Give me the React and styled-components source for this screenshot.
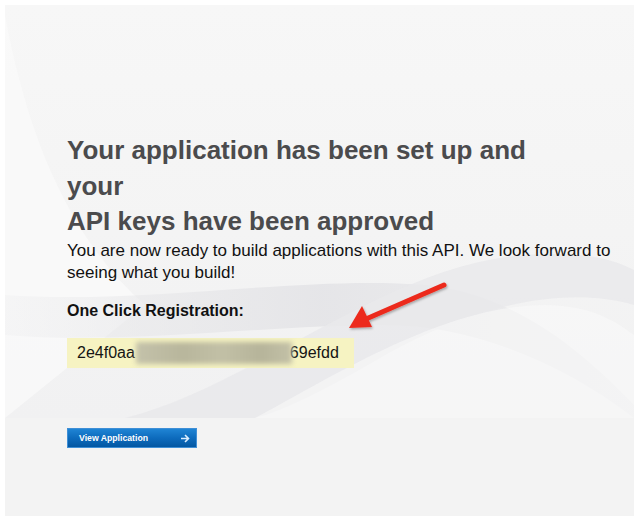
import React from 'react';
import styled, { createGlobalStyle } from 'styled-components';

const GlobalStyle = createGlobalStyle`
  html, body {
    margin: 0;
    padding: 0;
    background: #ffffff;
  }
  body {
    font-family: "Liberation Sans", Arial, Helvetica, sans-serif;
  }
`;

const Page = styled.div`
  padding: 5px;
  width: 640px;
  box-sizing: border-box;
`;

const Panel = styled.div`
  background: #f3f3f3;
  width: 629px;
  height: 511px;
  display: flex;
  flex-direction: column;
`;

const Hero = styled.section`
  position: relative;
  height: 413px;
  padding: 128px 0 0 62px;
  box-sizing: border-box;
  background: linear-gradient(180deg, #f7f7f7 0%, #f4f4f4 55%, #f1f1f2 100%);
  overflow: hidden;
`;

const Backdrop = styled.svg`
  position: absolute;
  left: 0;
  top: 0;
  width: 100%;
  height: 100%;
  pointer-events: none;
`;

const Content = styled.div`
  position: relative;
`;

const Heading = styled.h1`
  margin: 0;
  width: 470px;
  font-size: 26px;
  line-height: 35.5px;
  font-weight: bold;
  color: #4b4b4d;
`;

const Lead = styled.p`
  margin: 0;
  width: 560px;
  font-size: 17px;
  line-height: 22px;
  color: #111111;
`;

const Label = styled.h2`
  margin: 16px 0 0;
  font-size: 16px;
  line-height: 22px;
  font-weight: bold;
  color: #111111;
`;

const KeyBox = styled.div`
  margin-top: 16px;
  width: 287px;
  height: 30px;
  box-sizing: border-box;
  padding-left: 10px;
  display: flex;
  align-items: center;
  background: #f6f3c2;
  font-size: 16px;
  color: #151515;
  white-space: nowrap;
  overflow: hidden;
`;

const Hidden = styled.span`
  display: inline-block;
  width: 156px;
  height: 22px;
  margin: 0 -2px 0 1px;
  background: linear-gradient(90deg, #c4c2aa, #b8b69c 30%, #c2c0a6 55%, #b6b49a 80%, #c3c1a7);
  filter: blur(2.5px);
`;

const Pointer = styled.svg`
  position: absolute;
  left: 335px;
  top: 272px;
`;

const Footer = styled.div`
  padding: 10px 0 0 62px;
`;

const Button = styled.button`
  width: 130px;
  height: 20px;
  box-sizing: border-box;
  padding: 0 6px 0 11px;
  border: 1px solid #3f8fd6;
  background: linear-gradient(180deg, #1f84d4 0%, #0d6bbd 50%, #0357a2 100%);
  color: #ffffff;
  font-family: "Liberation Sans", Arial, Helvetica, sans-serif;
  font-size: 8.7px;
  font-weight: bold;
  display: flex;
  align-items: center;
  justify-content: space-between;
  cursor: pointer;
`;

const App = () => (
  <>
    <GlobalStyle />
    <Page>
      <Panel>
        <Hero>
          <Backdrop viewBox="0 0 629 413" preserveAspectRatio="none">
            <defs>
              <linearGradient id="band" x1="0" y1="0" x2="1" y2="0">
                <stop offset="0" stopColor="#e6e6e8" stopOpacity="0.2" />
                <stop offset="0.5" stopColor="#e4e4e7" stopOpacity="0.9" />
                <stop offset="1" stopColor="#e8e8ea" stopOpacity="0.5" />
              </linearGradient>
            </defs>
            <path d="M0 10 C 20 120, 60 230, 140 300 L 0 413 Z" fill="#fbfbfb" opacity="0.7" />
            <path d="M0 290 C 140 300, 300 270, 420 280 C 520 290, 590 360, 629 400 L 629 413 C 560 360, 470 320, 380 320 C 260 320, 120 340, 0 330 Z" fill="url(#band)" />
            <path d="M120 413 C 250 380, 380 260, 520 250 C 580 246, 610 255, 629 265 L 629 300 C 560 280, 470 300, 380 350 C 320 385, 280 405, 250 413 Z" fill="#e9e9eb" opacity="0.85" />
            <path d="M250 413 C 330 370, 440 300, 540 300 C 590 300, 615 320, 629 330 L 629 413 Z" fill="#fafafa" opacity="0.55" />
          </Backdrop>
          <Content>
            <Heading>
              Your application has been set up and your
              <br />
              API keys have been approved
            </Heading>
            <Lead>You are now ready to build applications with this API. We look forward to seeing what you build!</Lead>
            <Label>One Click Registration:</Label>
            <KeyBox>
              2e4f0aa
              <Hidden />
              69efdd
            </KeyBox>
          </Content>
          <Pointer width="115" height="60" viewBox="0 0 115 60">
            <defs>
              <filter id="shade" x="-20%" y="-20%" width="140%" height="140%">
                <feDropShadow dx="1" dy="1.5" stdDeviation="1.2" floodColor="#000" floodOpacity="0.3" />
              </filter>
            </defs>
            <g filter="url(#shade)">
              <line x1="104" y1="8" x2="26" y2="42" stroke="#ec2a1c" strokeWidth="5" strokeLinecap="round" />
              <polygon points="9,51 22,29 32,50" fill="#ec2a1c" />
            </g>
          </Pointer>
        </Hero>
        <Footer>
          <Button type="button">
            <span>View Application</span>
            <svg width="10" height="9" viewBox="0 0 10 9">
              <path d="M1 4.5 H8.5 M5 1 L8.5 4.5 L5 8" stroke="#dceeff" strokeWidth="1.6" fill="none" />
            </svg>
          </Button>
        </Footer>
      </Panel>
    </Page>
  </>
);

export default App;
